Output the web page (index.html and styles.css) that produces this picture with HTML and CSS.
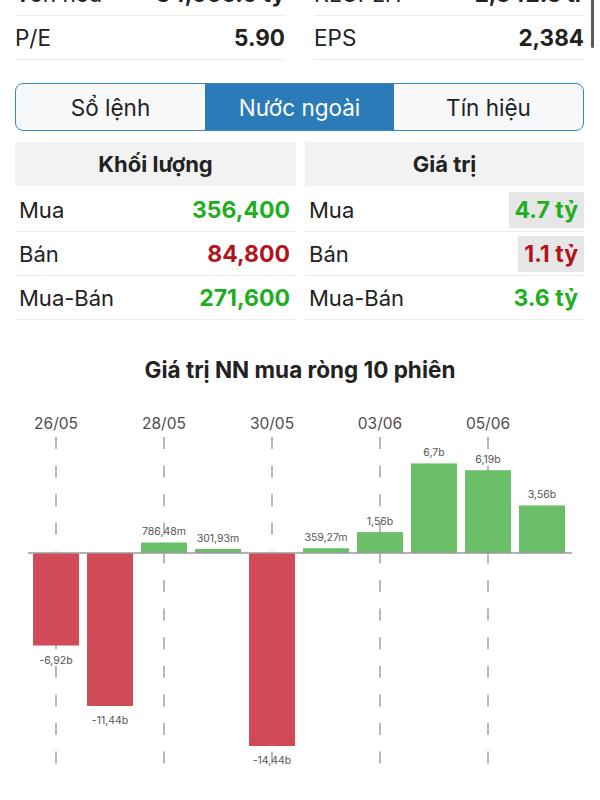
FILE: index.html
```html
<!DOCTYPE html>
<html lang="vi">
<head>
<meta charset="utf-8">
<link rel="stylesheet" href="styles.css">
</head>
<body>
<div class="page">
  <div class="scrollbar"></div>
  <div class="stats">
    <div class="stat"><span class="lbl">Vốn hóa</span><span class="val">34,066.0 tỷ</span></div>
    <div class="stat"><span class="lbl">KLCPLH</span><span class="val">2,342.3 tr</span></div>
    <div class="stat"><span class="lbl">P/E</span><span class="val">5.90</span></div>
    <div class="stat"><span class="lbl">EPS</span><span class="val">2,384</span></div>
  </div>

  <div class="segment">
    <div class="seg">Sổ lệnh</div>
    <div class="seg active">Nước ngoài</div>
    <div class="seg">Tín hiệu</div>
  </div>

  <div class="tables">
    <div class="tbl">
      <div class="th">Khối lượng</div>
      <div class="tr"><span class="lbl">Mua</span><span class="num up">356,400</span></div>
      <div class="tr"><span class="lbl">Bán</span><span class="num down">84,800</span></div>
      <div class="tr"><span class="lbl">Mua-Bán</span><span class="num up">271,600</span></div>
    </div>
    <div class="tbl">
      <div class="th">Giá trị</div>
      <div class="tr"><span class="lbl">Mua</span><span class="num up flash">4.7 tỷ</span></div>
      <div class="tr"><span class="lbl">Bán</span><span class="num down flash">1.1 tỷ</span></div>
      <div class="tr"><span class="lbl">Mua-Bán</span><span class="num up">3.6 tỷ</span></div>
    </div>
  </div>

  <h2 class="chart-title">Giá trị NN mua ròng 10 phiên</h2>

  <svg class="chart" width="600" height="410" viewBox="0 390 600 410" xmlns="http://www.w3.org/2000/svg">
    <g class="dates" font-size="15.5" fill="#4d4d4d" text-anchor="middle">
      <text x="56" y="428.5">26/05</text>
      <text x="164" y="428.5">28/05</text>
      <text x="272" y="428.5">30/05</text>
      <text x="380" y="428.5">03/06</text>
      <text x="488" y="428.5">05/06</text>
    </g>
    <g stroke="#b8b8b8" stroke-width="2" stroke-dasharray="12 16.6">
      <line x1="56" y1="437" x2="56" y2="769"/>
      <line x1="164" y1="437" x2="164" y2="769"/>
      <line x1="272" y1="437" x2="272" y2="769"/>
      <line x1="380" y1="437" x2="380" y2="769"/>
      <line x1="488" y1="437" x2="488" y2="769"/>
    </g>
    <g fill="#d04a58">
      <rect x="33" y="553" width="46" height="92.5"/>
      <rect x="87" y="553" width="46" height="153"/>
      <rect x="249" y="553" width="46" height="193"/>
    </g>
    <g fill="#6cbf69">
      <rect x="141" y="542.5" width="46" height="10.5"/>
      <rect x="195" y="549" width="46" height="4"/>
      <rect x="303" y="548.2" width="46" height="4.8"/>
      <rect x="357" y="532.1" width="46" height="20.9"/>
      <rect x="411" y="463.4" width="46" height="89.6"/>
      <rect x="465" y="470.2" width="46" height="82.8"/>
      <rect x="519" y="505.4" width="46" height="47.6"/>
    </g>
    <line x1="28" y1="553" x2="572" y2="553" stroke="#9a9a9a" stroke-width="1.5"/>
    <g font-size="10.5" fill="#555" text-anchor="middle">
      <text x="56" y="664">-6,92b</text>
      <text x="110" y="724">-11,44b</text>
      <text x="164" y="535">786,48m</text>
      <text x="218" y="542">301,93m</text>
      <text x="272" y="764">-14,44b</text>
      <text x="326" y="541">359,27m</text>
      <text x="380" y="525">1,56b</text>
      <text x="434" y="456">6,7b</text>
      <text x="488" y="463">6,19b</text>
      <text x="542" y="498">3,56b</text>
    </g>
  </svg>
</div>
</body>
</html>
```

FILE: styles.css
```css
* { box-sizing: border-box; }
html, body {
  margin: 0;
  padding: 0;
  background: #fff;
}
body {
  width: 600px;
  height: 800px;
  overflow: hidden;
  font-family: Inter, "Noto Sans", "Liberation Sans", sans-serif;
  color: #222;
}
.page {
  position: relative;
  padding: 0 16px 0 15px;
}
.scrollbar {
  position: absolute;
  left: 591px;
  top: 0;
  width: 3px;
  height: 76px;
  border-radius: 2px;
  background: #5a5a5a;
}
.stats {
  display: grid;
  grid-template-columns: 270px 270px;
  column-gap: 29px;
  margin-top: -28px;
}
.stat {
  height: 44px;
  display: flex;
  align-items: center;
  justify-content: space-between;
  border-bottom: 1px solid #ececec;
  font-size: 22.5px;
}
.stat .lbl { font-weight: 400; }
.stat .val { font-weight: 700; }

.segment {
  margin-top: 23px;
  height: 48px;
  display: grid;
  grid-template-columns: 1fr 1fr 1fr;
  border: 1.5px solid #3a87c0;
  border-radius: 8px;
  overflow: hidden;
  background: #f6f8f9;
}
.seg {
  display: flex;
  align-items: center;
  justify-content: center;
  font-size: 22.5px;
  color: #222;
}
.seg.active {
  background: #2b7bb9;
  color: #fff;
}

.tables {
  margin-top: 11px;
  display: grid;
  grid-template-columns: 281px 279px;
  column-gap: 9px;
}
.th {
  height: 44px;
  margin-bottom: 2px;
  background: #f2f2f2;
  display: flex;
  align-items: center;
  justify-content: center;
  font-size: 22px;
  font-weight: 700;
}
.tr {
  height: 44px;
  display: flex;
  align-items: center;
  justify-content: space-between;
  border-bottom: 1px solid #ececec;
  padding: 0 6px 0 4px;
  font-size: 22px;
}
.num {
  font-weight: 700;
  font-size: 23px;
}
.num.up { color: #1fae1f; }
.num.down { color: #b3131c; }
.num.flash {
  background: #e6e6e6;
  margin-right: -6px;
  padding: 0 6px 0 6px;
  height: 36px;
  display: flex;
  align-items: center;
}

.chart-title {
  margin: 37px -16px 7px -15px;
  font-size: 22.5px;
  line-height: 26px;
  font-weight: 700;
  text-align: center;
  color: #222;
}
.chart {
  display: block;
  margin-left: -15px;
  font-family: Inter, "Noto Sans", sans-serif;
}
```
